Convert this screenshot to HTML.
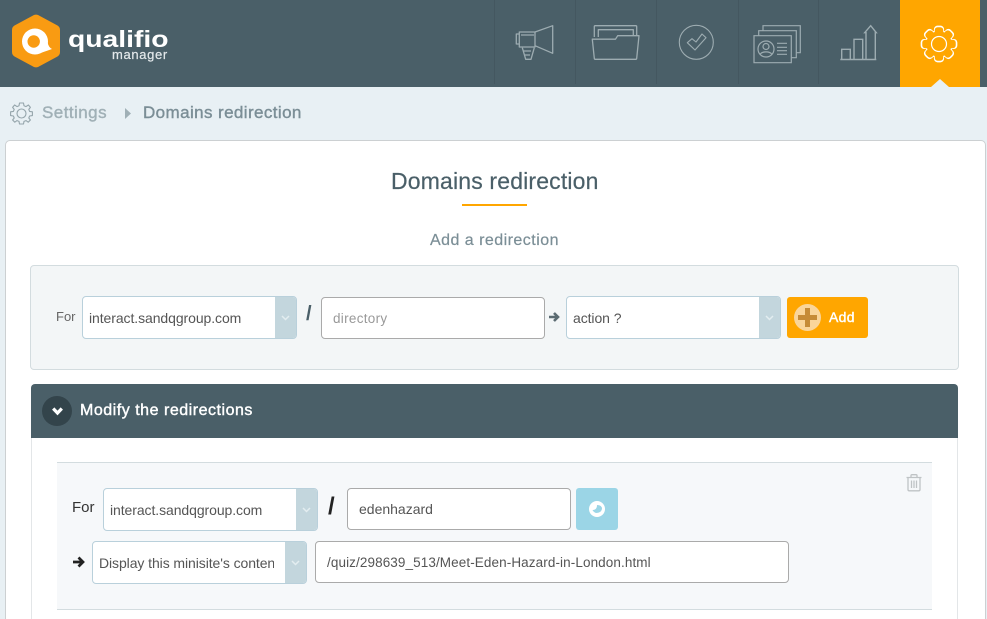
<!DOCTYPE html>
<html><head><meta charset="utf-8"><style>
html,body{margin:0;padding:0;width:987px;height:619px;overflow:hidden}
#root{position:absolute;left:0;top:0;width:987px;height:619px;overflow:hidden;background:#e8f0f4;font-family:"Liberation Sans",sans-serif;color:#555}
div,span{position:absolute;box-sizing:border-box;white-space:nowrap}
svg{position:absolute;overflow:visible}
.sel{background:#fff;border:1px solid #b9d0db;border-radius:4px;height:43px;width:215px;overflow:hidden;font-size:14px;color:#555}
.sel .h{right:0;top:0;bottom:0;width:21px;background:#c3d6dd}
.sel .h svg{left:6px;top:18px}
.sel .t{left:6px;top:13px;line-height:17px;letter-spacing:-.08px}
.inp{background:#fff;border:1px solid #aaa;border-radius:4px;font-size:14px;color:#555}
.sep{top:0;width:1px;height:84px;background:#445760}
</style></head><body><div id="root">
<div style="left:0;top:0;width:987px;height:87px;background:#4a5f68"></div>
<div class="sep" style="left:494px"></div><div class="sep" style="left:575px"></div><div class="sep" style="left:656px"></div><div class="sep" style="left:738px"></div><div class="sep" style="left:818px"></div>
<div style="left:900px;top:0;width:80px;height:87px;background:#ffa600"></div>
<svg style="left:931px;top:79px" width="18" height="8"><path d="M0 8L9 0L18 8Z" fill="#e8f0f4"/></svg>

<!-- logo -->
<svg style="left:0;top:0" width="70" height="70"><path d="M33.500 15.200Q36 14 38.500 15.200L57.500 25.500Q60 27 60 30V52Q60 55 57.500 56.500L38.500 66.800Q36 68 33.500 66.800L14.500 56.500Q12 55 12 52V30Q12 27 14.500 25.500Z" fill="#f99b12"/><circle cx="35" cy="41.500" r="13" fill="#fff"/><path d="M42 52.500Q48 50.500 52 49Q48.500 47.500 47.500 42Z" fill="#fff"/><circle cx="33.700" cy="41.500" r="6.200" fill="#f99b12"/></svg>
<span style="left:68px;top:25px;font-size:23px;line-height:28px;color:#fff;font-weight:bold;transform-origin:0 0;transform:scaleX(1.23)">qualifio</span>
<span style="left:112px;top:47px;font-size:13px;line-height:15px;color:#e4e9eb;letter-spacing:.65px;-webkit-text-stroke:.2px">manager</span>

<!-- nav icons -->
<svg style="left:490px;top:0" width="250" height="87" fill="none" stroke="#9dacb1" stroke-width="1.300" stroke-linejoin="round">
<path d="M29.300 32H45V47H29.300Z M26.300 34H29.300V44H26.300Z M31 35H44 M45 32L62.700 25.700V53.300L45 45.700"/>
<path d="M32.300 47.700L35.700 59.300H41L44.300 47.700 M33.500 51H41 M34.500 55H40"/>
<path d="M104.300 37V26.700Q104.300 25.700 105.300 25.700H145.700Q146.700 25.700 146.700 26.700V35.700"/><path d="M108.300 37V29.700H143.300V35.700"/>
<path d="M102.300 39.200H125.500L127.700 35.700H149L146.700 58.300Q146.600 59.300 145.700 59.300H105.300Q104.400 59.300 104.300 58.300Z"/>
<circle cx="206.300" cy="42.300" r="17" stroke-width="1.100"/><path d="M197.300 42.700L202 38.700L206 42L212 34L216 37.700L205 50Z" stroke-width="1.100"/>
</svg>
<svg style="left:737px;top:0" width="250" height="87" fill="none" stroke="#9dacb1" stroke-width="1.200">
<path d="M17 35.700H54.300V62.700H17Z"/><path d="M21.700 35.700V30.700H59.300V57.700H54.300"/><path d="M26 30.700V25.700H63.300V52.700H59.300"/>
<circle cx="29" cy="49" r="8"/><circle cx="29" cy="46.500" r="3"/><path d="M23 54.500C25 51 33 51 35 54.500"/>
<path d="M40 43.300H50M40 47.300H50M40 50.700H50M40 54.300H50"/>
<path d="M103.300 59.500H139.300 M104.700 59.500V49.300H113.300V59.500 M117 59.500V39.300H125.700V59.500 M129 59.500V32.700H127.700L133.700 25.700L139.300 32.700H138.300V59.500" stroke-width="1.400"/>
</svg>
<!-- gear -->
<svg style="left:920px;top:25px" width="38" height="38">
<defs><g id="gg">
<circle cx="19" cy="19" r="13.500"/>
<rect x="14.500" y="1.200" width="9" height="8" rx="3"/>
<rect x="14.500" y="1.200" width="9" height="8" rx="3" transform="rotate(45 19 19)"/>
<rect x="14.500" y="1.200" width="9" height="8" rx="3" transform="rotate(90 19 19)"/>
<rect x="14.500" y="1.200" width="9" height="8" rx="3" transform="rotate(135 19 19)"/>
<rect x="14.500" y="1.200" width="9" height="8" rx="3" transform="rotate(180 19 19)"/>
<rect x="14.500" y="1.200" width="9" height="8" rx="3" transform="rotate(225 19 19)"/>
<rect x="14.500" y="1.200" width="9" height="8" rx="3" transform="rotate(270 19 19)"/>
<rect x="14.500" y="1.200" width="9" height="8" rx="3" transform="rotate(315 19 19)"/>
</g></defs>
<use href="#gg" fill="#fff" stroke="#fff" stroke-width="1.100"/>
<use href="#gg" fill="#ffa600" stroke="#ffa600" stroke-width="0"  transform="translate(19 19) scale(.94) translate(-19 -19)"/>
<circle cx="19" cy="19" r="7.500" fill="none" stroke="#fff" stroke-width="1.200"/>
</svg>

<!-- breadcrumb -->
<svg style="left:10px;top:102px" width="23" height="23" fill="none" stroke="#95a5ab" stroke-width="1.100"><circle cx="11.500" cy="11.500" r="4.500"/><path d="M9.500 1H13.500L14 3.800L16 4.600L18.400 3L20.400 5.400L18.800 7.400L19.600 9.400L22.400 9.800V13.600L19.600 14L18.800 16L20.400 18L18.200 20.200L16 18.600L14 19.400L13.500 22H9.500L9 19.400L7 18.600L4.800 20.200L2.600 18L4.200 16L3.400 14L.6 13.600V9.800L3.400 9.400L4.200 7.400L2.600 5.400L4.600 3L7 4.600L9 3.800Z" stroke-linejoin="round"/></svg>
<span style="left:42px;top:103px;font-size:17px;line-height:20px;color:#a0b0b6;letter-spacing:.45px;-webkit-text-stroke:.4px">Settings</span>
<svg style="left:125px;top:108px" width="7" height="11"><path d="M0 0L6 5.500L0 11Z" fill="#a0b0b6"/></svg>
<span style="left:143px;top:103px;font-size:17px;line-height:20px;color:#7b8e96;letter-spacing:.4px;-webkit-text-stroke:.4px">Domains redirection</span>

<!-- card -->
<div style="left:5px;top:140px;width:981px;height:490px;background:#fff;border:1px solid #ccd0d2;border-radius:5px"></div>
<span style="left:391px;top:167px;font-size:23px;line-height:28px;color:#4a5f68;letter-spacing:.16px;-webkit-text-stroke:.2px">Domains redirection</span>
<div style="left:462px;top:204px;width:65px;height:2px;background:#ffa600"></div>
<span style="left:430px;top:231px;font-size:16px;line-height:19px;color:#7b8e96;letter-spacing:.47px;-webkit-text-stroke:.2px">Add a redirection</span>

<!-- add panel -->
<div style="left:30px;top:265px;width:929px;height:105px;background:#f3f6f7;border:1px solid #d3dcdf;border-radius:4px"></div>
<span style="left:56px;top:308px;font-size:13px;line-height:17px;color:#666">For</span>
<div class="sel" style="left:82px;top:296px"><span class="t">interact.sandqgroup.com</span><div class="h"><svg width="9" height="6" fill="none" stroke="#e3edf0" stroke-width="1.500"><path d="M1 1L4.500 4.500L8 1"/></svg></div></div>
<span style="left:306px;top:304px;font-size:20px;line-height:20px;color:#4a5f68;font-weight:bold">/</span>
<div class="inp" style="left:321px;top:297px;width:224px;height:42px"><span style="left:11px;top:12px;line-height:17px;font-size:13.500px;color:#999;letter-spacing:.3px">directory</span></div>
<svg style="left:548px;top:311px" width="12" height="12"><path d="M1 6H9.500M6 2L10 6L6 10" fill="none" stroke="#5b6b72" stroke-width="2.600"/></svg>
<div class="sel" style="left:566px;top:296px"><span class="t">action ?</span><div class="h"><svg width="9" height="6" fill="none" stroke="#e3edf0" stroke-width="1.500"><path d="M1 1L4.500 4.500L8 1"/></svg></div></div>
<div style="left:787px;top:297px;width:81px;height:41px;background:#ffa600;border-radius:3px"></div>
<div style="left:794px;top:304px;width:27px;height:27px;border-radius:50%;background:#fad59a"></div>
<div style="left:798px;top:315px;width:19px;height:5px;background:#c68b37"></div>
<div style="left:805px;top:308px;width:5px;height:19px;background:#c68b37"></div>
<span style="left:829px;top:309px;font-size:14px;line-height:17px;color:#fff;-webkit-text-stroke:.4px;letter-spacing:.3px">Add</span>

<!-- modify section -->
<div style="left:31px;top:384px;width:927px;height:54px;background:#4a5f68;border-radius:4px 4px 0 0"></div>
<div style="left:31px;top:438px;width:1px;height:181px;background:#e3e6e8"></div>
<div style="left:957px;top:438px;width:1px;height:181px;background:#e3e6e8"></div>
<div style="left:42px;top:396px;width:30px;height:30px;border-radius:50%;background:#33444b"></div>
<svg style="left:52px;top:407px" width="11" height="9" fill="none" stroke="#fff" stroke-width="3.200"><path d="M1.200 1.500L5.500 6L9.800 1.500"/></svg>
<span style="left:80px;top:401px;font-size:16px;line-height:19px;color:#fff;letter-spacing:.52px;-webkit-text-stroke:.4px">Modify the redirections</span>

<!-- row -->
<div style="left:57px;top:462px;width:875px;height:148px;background:#f6f8fa;border-top:1px solid #d3dcdf;border-bottom:1px solid #d3dcdf"></div>
<span style="left:72px;top:499px;font-size:15px;line-height:18px;color:#333">For</span>
<div class="sel" style="left:103px;top:488px"><span class="t">interact.sandqgroup.com</span><div class="h"><svg width="9" height="6" fill="none" stroke="#e3edf0" stroke-width="1.500"><path d="M1 1L4.500 4.500L8 1"/></svg></div></div>
<span style="left:328px;top:495px;font-size:24px;line-height:24px;color:#222;font-weight:bold">/</span>
<div class="inp" style="left:347px;top:488px;width:224px;height:42px"><span style="left:11px;top:12px;line-height:17px">edenhazard</span></div>
<div style="left:576px;top:488px;width:42px;height:42px;background:#9bd5e6;border-radius:3px"></div>
<div style="left:589px;top:501px;width:16px;height:16px;border-radius:50%;background:#fff"></div>
<svg style="left:589px;top:501px" width="16" height="16"><path d="M8 4Q13 4 13 8Q12 12 7 12Q4.500 11 3.500 9Q8 9 8 4Z" fill="#9bd5e6"/></svg>
<svg style="left:906px;top:474px" width="16" height="18" fill="none" stroke="#bfc3c5" stroke-width="1.300"><path d="M.5 3.500H15.500M5 3.500V1.500Q5 .7 6 .7H10Q11 .7 11 1.500V3.500M2 3.500V15.500Q2 16.800 3.300 16.800H12.700Q14 16.800 14 15.500V3.500M5.500 6.500V14M8 6.500V14M10.500 6.500V14"/></svg>
<svg style="left:72px;top:556px" width="13" height="13"><path d="M1 6H10.500M6.500 1.500L11 6L6.500 10.500" fill="none" stroke="#222" stroke-width="2.700"/></svg>
<div class="sel" style="left:92px;top:541px"><span class="t" style="width:175px;overflow:hidden">Display this minisite's content</span><div class="h"><svg width="9" height="6" fill="none" stroke="#e3edf0" stroke-width="1.500"><path d="M1 1L4.500 4.500L8 1"/></svg></div></div>
<div class="inp" style="left:315px;top:541px;width:474px;height:42px"><span style="left:11px;top:12px;line-height:17px;font-size:13.500px;letter-spacing:.1px">/quiz/298639_513/Meet-Eden-Hazard-in-London.html</span></div>
</div></body></html>
